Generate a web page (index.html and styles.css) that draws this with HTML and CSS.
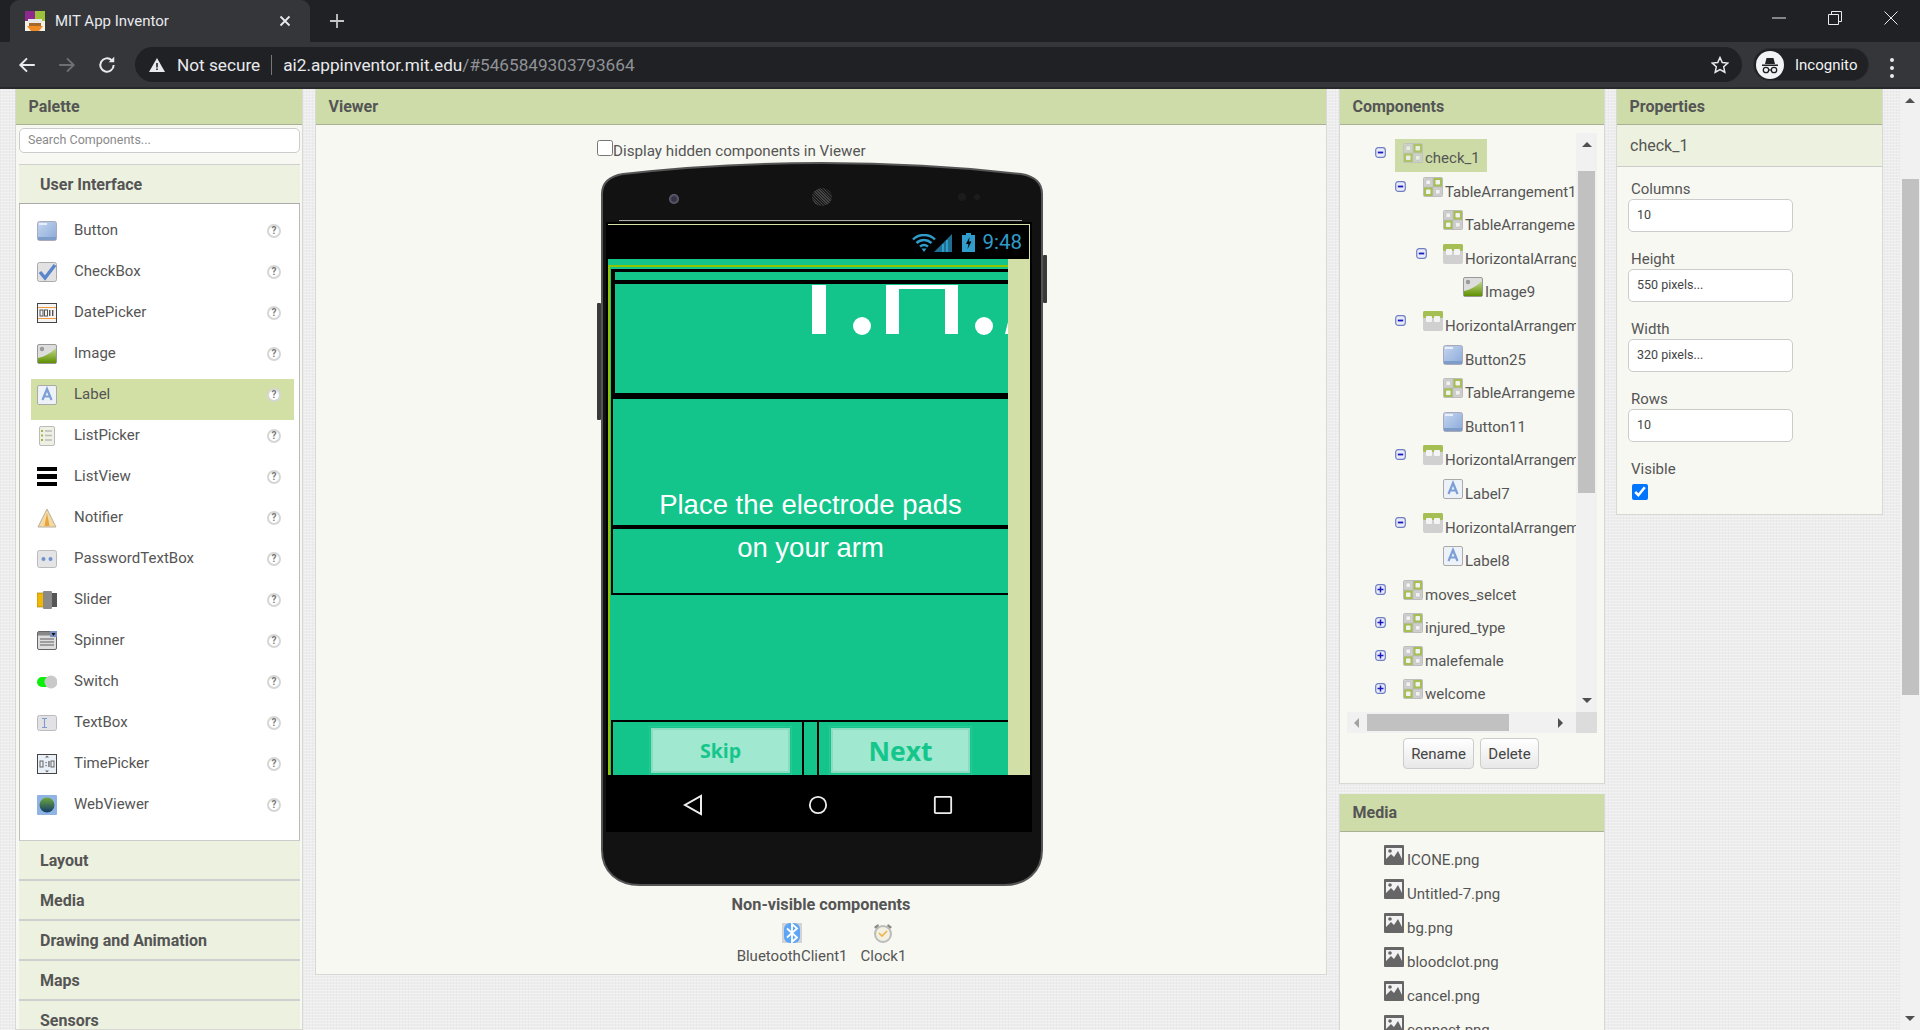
FILE: index.html
```html
<!DOCTYPE html>
<html lang="en">
<head>
<meta charset="utf-8">
<title>MIT App Inventor</title>
<link rel="stylesheet" href="styles.css">
</head>
<body>
<svg class="defs" width="0" height="0" aria-hidden="true">
  <defs>
    <linearGradient id="gBtn" x1="0" y1="0" x2="1" y2="1"><stop offset="0" stop-color="#c5d6f0"/><stop offset="1" stop-color="#8aa9d8"/></linearGradient>
    <linearGradient id="gHill" x1="0" y1="0" x2="0" y2="1"><stop offset="0" stop-color="#c2d98c"/><stop offset="1" stop-color="#5f8f00"/></linearGradient>
    <linearGradient id="gGlobe" x1="0" y1="0" x2="0" y2="1"><stop offset="0" stop-color="#6fa83c"/><stop offset="1" stop-color="#123a6a"/></linearGradient>
  </defs>
  <symbol id="i-button" viewBox="0 0 20 20"><rect x=".5" y=".5" width="19" height="19" rx="2" fill="url(#gBtn)" stroke="#aab"/><rect x="1" y="16" width="18" height="3" fill="#7e9cc8"/><rect x="2" y="2" width="8" height="2" fill="#e6eefa"/></symbol>
  <symbol id="i-check" viewBox="0 0 20 20"><rect x=".5" y=".5" width="19" height="19" rx="2" fill="#e2e2e2" stroke="#aaa"/><path d="M3 10l5 6L18 3" fill="none" stroke="#5b86cc" stroke-width="3.4"/></symbol>
  <symbol id="i-date" viewBox="0 0 20 20"><rect x=".5" y=".5" width="19" height="19" fill="#f4f4f4" stroke="#444"/><rect x="1" y="4" width="18" height="1" fill="#f09a3a"/><rect x="1" y="15" width="18" height="1" fill="#f09a3a"/><rect x="3" y="7" width="3" height="6" fill="none" stroke="#555"/><rect x="7.5" y="7" width="3" height="6" fill="none" stroke="#555"/><rect x="12" y="7" width="1.4" height="6" fill="#555"/><rect x="15" y="7" width="1.4" height="6" fill="#555"/></symbol>
  <symbol id="i-image" viewBox="0 0 20 20"><rect x=".5" y=".5" width="19" height="19" rx="1.5" fill="#ddd" stroke="#999"/><path d="M1 14C6 13 11 11 19 4V19H1z" fill="url(#gHill)"/><circle cx="5" cy="5" r="2.2" fill="#999"/></symbol>
  <symbol id="i-label" viewBox="0 0 20 20"><rect x=".5" y=".5" width="19" height="19" rx="1.5" fill="#edf1f8" stroke="#aaa"/><path d="M5.5 15L10 4l4.500 11M7 11.500h6" fill="none" stroke="#7c9fd6" stroke-width="2.200"/></symbol>
  <symbol id="i-listpicker" viewBox="0 0 20 20"><rect x="2.500" y=".5" width="15" height="19" rx="1.5" fill="#eef0e4" stroke="#bbb"/><path d="M8 5h7M8 9.500h7M8 14h7" stroke="#bbb" stroke-width="1.500"/><path d="M4 5h2M4 9.500h2M4 14h2" stroke="#9ab944" stroke-width="1.800"/></symbol>
  <symbol id="i-listview" viewBox="0 0 20 20"><rect y="0" width="20" height="4" fill="#000"/><rect y="7" width="20" height="5" fill="#000"/><rect y="15" width="20" height="4" fill="#000"/></symbol>
  <symbol id="i-notifier" viewBox="0 0 20 20"><path d="M10 1L19 19H1z" fill="#f3d9a4" stroke="#b9b09a"/><path d="M10 5l2.500 13h-5z" fill="#e8a33c"/></symbol>
  <symbol id="i-password" viewBox="0 0 20 20"><rect x=".5" y="1.500" width="19" height="17" rx="2" fill="#e4e4e6" stroke="#bbb"/><circle cx="6.500" cy="10" r="2" fill="#6f93cc"/><circle cx="13.500" cy="10" r="2" fill="#6f93cc"/></symbol>
  <symbol id="i-slider" viewBox="0 0 20 20"><rect y="3" width="8" height="14" fill="#f2b705" stroke="#9a7b00" stroke-width=".6"/><rect x="14" y="3" width="6" height="14" fill="#555"/><rect x="6" y="1" width="9" height="18" rx="1" fill="#8a8a8a"/></symbol>
  <symbol id="i-spinner" viewBox="0 0 20 20"><rect x=".5" y=".5" width="19" height="18" rx="1.5" fill="#ddd" stroke="#666"/><rect x="1" y="1" width="12" height="3.500" fill="#888"/><rect x="13" y="0" width="7" height="6" fill="#7d92c4"/><path d="M14.500 2h4l-2 3z" fill="#111"/><path d="M3 8h14M3 11h14M3 14h14" stroke="#888" stroke-width="1.300"/></symbol>
  <symbol id="i-switch" viewBox="0 0 20 20"><rect x="0" y="5" width="16" height="10" rx="5" fill="#0bf00b"/><circle cx="14" cy="10" r="6.500" fill="#c9c9c9"/></symbol>
  <symbol id="i-textbox" viewBox="0 0 20 20"><rect x=".5" y="2.500" width="19" height="15" rx="2" fill="#e2e2e6" stroke="#bbb"/><path d="M5 5.500h5M5 14.500h5M7.500 5.500v9" stroke="#7f9bc9" stroke-width="1.100" fill="none"/></symbol>
  <symbol id="i-time" viewBox="0 0 20 20"><rect x=".5" y=".5" width="19" height="19" fill="#eaf0f7" stroke="#444"/><path d="M10 1.500l2 2H8zM10 18.500l2-2H8z" fill="#666"/><rect x="3" y="7" width="3" height="6" fill="none" stroke="#666"/><rect x="8.500" y="8" width="1.200" height="1.200" fill="#666"/><rect x="8.500" y="11" width="1.200" height="1.200" fill="#666"/><rect x="11.300" y="7" width="1.300" height="6" fill="#666"/><rect x="14" y="7" width="3" height="6" fill="none" stroke="#666"/></symbol>
  <symbol id="i-web" viewBox="0 0 20 20"><rect width="20" height="20" rx="1" fill="#8fb4e4"/><circle cx="10" cy="10" r="7.500" fill="url(#gGlobe)"/></symbol>
  <symbol id="i-table" viewBox="0 0 20 20"><rect width="20" height="20" rx="2" fill="#bdbdbd"/><rect x="1" y="1" width="8.500" height="8.500" fill="#cfcfcf"/><rect x="10.500" y="1" width="8.500" height="8.500" fill="#a5bf55"/><rect x="1" y="10.500" width="8.500" height="8.500" fill="#a5bf55"/><rect x="10.500" y="10.500" width="8.500" height="8.500" fill="#cfcfcf"/><rect x="3" y="3" width="4.500" height="4.500" rx=".8" fill="#f2f2f2" stroke="#aaa" stroke-width=".4"/><rect x="12.500" y="3" width="4.500" height="4.500" rx=".8" fill="#f2f2f2"/><rect x="3" y="12.500" width="4.500" height="4.500" rx=".8" fill="#f2f2f2"/><rect x="12.500" y="12.500" width="4.500" height="4.500" rx=".8" fill="#f2f2f2" stroke="#aaa" stroke-width=".4"/></symbol>
  <symbol id="i-horiz" viewBox="0 0 20 20"><rect width="20" height="20" rx="2" fill="#d0d0d0"/><rect width="20" height="7" rx="1.500" fill="#a5bf55"/><rect x="3" y="5" width="6" height="6" rx="1" fill="#f4f4f4"/><rect x="11" y="5" width="6" height="6" rx="1" fill="#f4f4f4"/></symbol>
  <symbol id="i-media" viewBox="0 0 20 20"><rect width="20" height="20" rx="1" fill="#666"/><rect x="2" y="3" width="16" height="11" fill="#f2f2f2"/><path d="M2 14l5-5 3 3 4-6 4 8z" fill="#666"/><circle cx="6" cy="6" r="1.800" fill="#666"/></symbol>
  <symbol id="i-minus" viewBox="0 0 11 11"><rect x=".7" y=".7" width="9.600" height="9.600" rx="2.500" fill="#e9ecf8" stroke="#6f7fc0" stroke-width="1.200"/><rect x="2.800" y="4.600" width="5.400" height="1.800" fill="#1a1ac0"/></symbol>
  <symbol id="i-plus" viewBox="0 0 11 11"><rect x=".7" y=".7" width="9.600" height="9.600" rx="2.500" fill="#e9ecf8" stroke="#6f7fc0" stroke-width="1.200"/><path d="M2.500 5.500h6M5.500 2.500v6" stroke="#1a1ac0" stroke-width="1.500"/></symbol>
</svg>

<header class="tabstrip">
  <div class="tab">
    <svg class="favicon" viewBox="0 0 20 20"><rect width="10" height="10" fill="#8e2a8e"/><rect x="10" width="10" height="10" fill="#9cc23c"/><rect y="10" width="20" height="10" fill="#f6f1e4"/><rect x="3" y="8" width="14" height="4" fill="#e8e8e8"/><rect x="4" y="12" width="12" height="3" fill="#a5682a"/><path d="M2 15h16l-4 5H6z" fill="#f08a24"/></svg>
    <span class="tab-title">MIT App Inventor</span>
    <svg class="tab-close" viewBox="0 0 12 12"><path d="M1.500 1.500l9 9M10.500 1.500l-9 9" stroke="#e8eaed" stroke-width="1.800"/></svg>
  </div>
  <svg class="newtab" viewBox="0 0 16 16"><path d="M8 1v14M1 8h14" stroke="#c4c7c5" stroke-width="1.800"/></svg>
  <div class="winctl">
    <svg viewBox="0 0 14 14"><path d="M0 7h14" stroke="#e8eaed" stroke-width="1"/></svg>
    <svg viewBox="0 0 14 14"><path d="M.5 3.500h10v10H.5zM3.500 3.500v-3h10v10h-3" fill="none" stroke="#e8eaed" stroke-width="1"/></svg>
    <svg viewBox="0 0 14 14"><path d="M.5.500l13 13M13.500.500l-13 13" stroke="#e8eaed" stroke-width="1"/></svg>
  </div>
</header>

<nav class="toolbar">
  <svg class="navbtn" viewBox="0 0 18 18"><path d="M16 9H3M9 3L3 9l6 6" fill="none" stroke="#e8eaed" stroke-width="1.800"/></svg>
  <svg class="navbtn dim" viewBox="0 0 18 18"><path d="M2 9h13M9 3l6 6-6 6" fill="none" stroke="#6d6f73" stroke-width="1.800"/></svg>
  <svg class="navbtn" viewBox="0 0 18 18"><path d="M15 9a6 6 0 1 1-1.800-4.300" fill="none" stroke="#e8eaed" stroke-width="1.800"/><path d="M15.500 1.500v5h-5z" fill="#e8eaed"/></svg>
  <div class="omnibox">
    <svg class="warn" viewBox="0 0 16 14"><path d="M8 0l8 14H0z" fill="#e8eaed"/><path d="M7.200 5h1.600v4.500H7.200zM7.200 10.500h1.600v1.600H7.200z" fill="#202124"/></svg>
    <span class="notsecure">Not secure</span>
    <span class="omnisep"></span>
    <span class="url">ai2.appinventor.mit.edu<span class="urlrest">/#5465849303793664</span></span>
    <svg class="star" viewBox="0 0 18 18"><path d="M9 1.500l2.300 5 5.400.6-4 3.700 1.100 5.400L9 13.500l-4.800 2.700 1.100-5.400-4-3.700 5.400-.6z" fill="none" stroke="#e8eaed" stroke-width="1.500"/></svg>
  </div>
  <div class="profile">
    <svg class="avatar" viewBox="0 0 28 28"><circle cx="14" cy="14" r="14" fill="#f1f3f4"/><path d="M9 13l1.500-6h7L19 13zM6 13.500h16v1.500H6z" fill="#202124"/><circle cx="10" cy="19" r="2.700" fill="none" stroke="#202124" stroke-width="1.300"/><circle cx="18" cy="19" r="2.700" fill="none" stroke="#202124" stroke-width="1.300"/><path d="M12.500 19h3" stroke="#202124" stroke-width="1.200"/></svg>
    <span>Incognito</span>
  </div>
  <div class="menu"><i></i><i></i><i></i></div>
</nav>

<main class="workspace">
  <section class="panel palette">
    <h2 class="panel-head">Palette</h2>
    <div class="searchbox">Search Components...</div>
    <h3 class="section open">User Interface</h3>
    <ul class="plist">
      <li class="prow"><svg class="ico"><use href="#i-button"/></svg><span class="pname">Button</span><span class="help">?</span></li>
      <li class="prow"><svg class="ico"><use href="#i-check"/></svg><span class="pname">CheckBox</span><span class="help">?</span></li>
      <li class="prow"><svg class="ico"><use href="#i-date"/></svg><span class="pname">DatePicker</span><span class="help">?</span></li>
      <li class="prow"><svg class="ico"><use href="#i-image"/></svg><span class="pname">Image</span><span class="help">?</span></li>
      <li class="prow hot"><svg class="ico"><use href="#i-label"/></svg><span class="pname">Label</span><span class="help">?</span></li>
      <li class="prow"><svg class="ico"><use href="#i-listpicker"/></svg><span class="pname">ListPicker</span><span class="help">?</span></li>
      <li class="prow"><svg class="ico"><use href="#i-listview"/></svg><span class="pname">ListView</span><span class="help">?</span></li>
      <li class="prow"><svg class="ico"><use href="#i-notifier"/></svg><span class="pname">Notifier</span><span class="help">?</span></li>
      <li class="prow"><svg class="ico"><use href="#i-password"/></svg><span class="pname">PasswordTextBox</span><span class="help">?</span></li>
      <li class="prow"><svg class="ico"><use href="#i-slider"/></svg><span class="pname">Slider</span><span class="help">?</span></li>
      <li class="prow"><svg class="ico"><use href="#i-spinner"/></svg><span class="pname">Spinner</span><span class="help">?</span></li>
      <li class="prow"><svg class="ico"><use href="#i-switch"/></svg><span class="pname">Switch</span><span class="help">?</span></li>
      <li class="prow"><svg class="ico"><use href="#i-textbox"/></svg><span class="pname">TextBox</span><span class="help">?</span></li>
      <li class="prow"><svg class="ico"><use href="#i-time"/></svg><span class="pname">TimePicker</span><span class="help">?</span></li>
      <li class="prow"><svg class="ico"><use href="#i-web"/></svg><span class="pname">WebViewer</span><span class="help">?</span></li>
    </ul>
    <h3 class="section">Layout</h3>
    <h3 class="section">Media</h3>
    <h3 class="section">Drawing and Animation</h3>
    <h3 class="section">Maps</h3>
    <h3 class="section">Sensors</h3>
  </section>

  <section class="panel viewer">
    <h2 class="panel-head">Viewer</h2>
    <div class="viewer-body">
      <label class="hidden-toggle"><input type="checkbox" class="vcheck">Display hidden components in Viewer</label>
      <div class="phone">
        <svg class="phone-shell" viewBox="0 0 442 724"><path d="M1 32C1 20 10 14 22 12C100 3 170 1 221 1C272 1 342 3 420 12C432 14 441 20 441 32V688C441 710 425 723 403 723H39C17 723 1 710 1 688Z" fill="#121212" stroke="#555" stroke-width="2"/></svg>
        <span class="sidekey left"></span>
        <span class="sidekey right"></span>
        <div class="bezel-top">
          <span class="cam"></span>
          <span class="speaker"></span>
          <span class="sensor"></span>
          <span class="sensor two"></span>
          <span class="bezel-line"></span>
        </div>
        <div class="screen">
          <div class="statusbar">
            <svg class="st-wifi" viewBox="0 0 24 18"><path d="M1 5.500C7-.5 17-.5 23 5.500M4.500 9C9 5 15 5 19.500 9M8 12.500c2.500-2 5.500-2 8 0" fill="none" stroke="#2f9ccb" stroke-width="2.400"/><path d="M9.500 14.500h5L12 18z" fill="#2f9ccb"/></svg>
            <svg class="st-signal" viewBox="0 0 18 18"><path d="M0 18L18 0v18z" fill="#1e6f92"/><path d="M8 18v-8h2v8zM12 18V6h2v12z" fill="#2f9ccb"/></svg>
            <svg class="st-batt" viewBox="0 0 13 19"><path d="M4 0h5v2h4v17H0V2h4z" fill="#2f9ccb"/><path d="M7.500 4L4 11h2.500L5.500 16 9.500 8.500H7z" fill="#000"/></svg>
            <span class="st-time">9:48</span>
          </div>
          <div class="stage">
            <div class="app">
              <div class="form">
                <div class="tbl">
                  <div class="tbl-top">
                    <div class="strip"></div>
                    <svg class="picture" viewBox="0 0 393 109"><path d="M197 1h14v49h-14zM271 1h72v49h-13V5h-46v45h-13z" fill="#fff"/><circle cx="247" cy="42" r="9" fill="#fff"/><circle cx="369" cy="42" r="9" fill="#fff"/><path d="M390 50l3-12v12z" fill="#fff"/></svg>
                  </div>
                  <div class="tbl-mid"><span class="big">Place the electrode pads</span></div>
                  <div class="tbl-low"><span class="big">on your arm</span></div>
                </div>
                <div class="gap"></div>
                <div class="bottombar">
                  <div class="bcell first"><span class="appbtn skip">Skip</span></div>
                  <div class="bcell mid"></div>
                  <div class="bcell last"><span class="appbtn next">Next</span></div>
                </div>
              </div>
            </div>
            <div class="sidestrip"></div>
          </div>
          <div class="navbar">
            <svg class="nv" viewBox="0 0 20 22"><path d="M18 2v18L2 11z" fill="none" stroke="#eee" stroke-width="2"/></svg>
            <svg class="nv" viewBox="0 0 22 22"><circle cx="11" cy="11" r="9" fill="none" stroke="#eee" stroke-width="2"/></svg>
            <svg class="nv" viewBox="0 0 22 22"><rect x="2" y="2" width="18" height="18" rx="1" fill="none" stroke="#eee" stroke-width="2"/></svg>
          </div>
        </div>
      </div>
      <div class="nonvis-title">Non-visible components</div>
      <div class="nonvis">
        <div class="nv-item">
          <svg class="ico" viewBox="0 0 20 20"><rect width="20" height="20" fill="#d4d4d4"/><rect x="2" y="0" width="16" height="20" rx="6" fill="#5ea6f5"/><path d="M5 5.500l10 9-5 4.500V1l5 4.500-10 9" fill="none" stroke="#fff" stroke-width="1.800"/></svg>
          <span>BluetoothClient1</span>
        </div>
        <div class="nv-item">
          <svg class="ico" viewBox="0 0 20 20"><path d="M1 4l4-3 1 2-3 3zM19 4l-4-3-1 2 3 3z" fill="#8a8a7a"/><circle cx="10" cy="11" r="8" fill="#f2f0e0" stroke="#bbb" stroke-width="2"/><path d="M6 10l3 3 5-5" fill="none" stroke="#f2b24a" stroke-width="1.600"/></svg>
          <span>Clock1</span>
        </div>
      </div>
    </div>
  </section>

  <div class="col-comp">
    <section class="panel components">
      <h2 class="panel-head">Components</h2>
      <div class="treebox">
        <div class="tree">
          <div class="node l0"><svg class="tog"><use href="#i-minus"/></svg><div class="nbody sel"><svg class="ico dim"><use href="#i-table"/></svg><span class="nlabel">check_1</span></div></div>
          <div class="node l1"><svg class="tog"><use href="#i-minus"/></svg><div class="nbody"><svg class="ico"><use href="#i-table"/></svg><span class="nlabel">TableArrangement1</span></div></div>
          <div class="node l2 notog"><div class="nbody"><svg class="ico"><use href="#i-table"/></svg><span class="nlabel">TableArrangeme</span></div></div>
          <div class="node l2"><svg class="tog"><use href="#i-minus"/></svg><div class="nbody"><svg class="ico"><use href="#i-horiz"/></svg><span class="nlabel">HorizontalArrang</span></div></div>
          <div class="node l3 notog"><div class="nbody"><svg class="ico"><use href="#i-image"/></svg><span class="nlabel">Image9</span></div></div>
          <div class="node l1"><svg class="tog"><use href="#i-minus"/></svg><div class="nbody"><svg class="ico"><use href="#i-horiz"/></svg><span class="nlabel">HorizontalArrangem</span></div></div>
          <div class="node l2 notog"><div class="nbody"><svg class="ico"><use href="#i-button"/></svg><span class="nlabel">Button25</span></div></div>
          <div class="node l2 notog"><div class="nbody"><svg class="ico"><use href="#i-table"/></svg><span class="nlabel">TableArrangeme</span></div></div>
          <div class="node l2 notog"><div class="nbody"><svg class="ico"><use href="#i-button"/></svg><span class="nlabel">Button11</span></div></div>
          <div class="node l1"><svg class="tog"><use href="#i-minus"/></svg><div class="nbody"><svg class="ico"><use href="#i-horiz"/></svg><span class="nlabel">HorizontalArrangem</span></div></div>
          <div class="node l2 notog"><div class="nbody"><svg class="ico"><use href="#i-label"/></svg><span class="nlabel">Label7</span></div></div>
          <div class="node l1"><svg class="tog"><use href="#i-minus"/></svg><div class="nbody"><svg class="ico"><use href="#i-horiz"/></svg><span class="nlabel">HorizontalArrangem</span></div></div>
          <div class="node l2 notog"><div class="nbody"><svg class="ico"><use href="#i-label"/></svg><span class="nlabel">Label8</span></div></div>
          <div class="node l0 closed"><svg class="tog"><use href="#i-plus"/></svg><div class="nbody"><svg class="ico"><use href="#i-table"/></svg><span class="nlabel">moves_selcet</span></div></div>
          <div class="node l0 closed"><svg class="tog"><use href="#i-plus"/></svg><div class="nbody"><svg class="ico"><use href="#i-table"/></svg><span class="nlabel">injured_type</span></div></div>
          <div class="node l0 closed"><svg class="tog"><use href="#i-plus"/></svg><div class="nbody"><svg class="ico"><use href="#i-table"/></svg><span class="nlabel">malefemale</span></div></div>
          <div class="node l0 closed"><svg class="tog"><use href="#i-plus"/></svg><div class="nbody"><svg class="ico"><use href="#i-table"/></svg><span class="nlabel">welcome</span></div></div>
          <div class="node l0 closed"><span class="togspace"></span><div class="nbody"><svg class="ico"><use href="#i-table"/></svg></div></div>
        </div>
        <div class="vbar">
          <span class="arrow up"></span>
          <span class="vthumb"></span>
          <span class="arrow down"></span>
        </div>
        <div class="hbar">
          <span class="arrow lf"></span>
          <span class="hthumb"></span>
          <span class="arrow rt"></span>
        </div>
        <div class="corner"></div>
      </div>
      <div class="actions">
        <button class="btn rename">Rename</button>
        <button class="btn delete">Delete</button>
      </div>
    </section>
    <section class="panel media">
      <h2 class="panel-head media-head">Media</h2>
      <ul class="mlist">
        <li class="mrow"><svg class="ico"><use href="#i-media"/></svg><span>ICONE.png</span></li>
        <li class="mrow"><svg class="ico"><use href="#i-media"/></svg><span>Untitled-7.png</span></li>
        <li class="mrow"><svg class="ico"><use href="#i-media"/></svg><span>bg.png</span></li>
        <li class="mrow"><svg class="ico"><use href="#i-media"/></svg><span>bloodclot.png</span></li>
        <li class="mrow"><svg class="ico"><use href="#i-media"/></svg><span>cancel.png</span></li>
        <li class="mrow"><svg class="ico"><use href="#i-media"/></svg><span>connect.png</span></li>
      </ul>
    </section>
  </div>

  <section class="panel properties">
    <h2 class="panel-head">Properties</h2>
    <div class="prop-title">check_1</div>
    <div class="prop-body">
      <div class="prop"><div class="prop-label">Columns</div><div class="prop-input">10</div></div>
      <div class="prop"><div class="prop-label">Height</div><div class="prop-input">550 pixels...</div></div>
      <div class="prop"><div class="prop-label">Width</div><div class="prop-input">320 pixels...</div></div>
      <div class="prop"><div class="prop-label">Rows</div><div class="prop-input">10</div></div>
      <div class="prop"><div class="prop-label">Visible</div><input type="checkbox" class="pcheck" checked></div>
    </div>
  </section>

  <aside class="pagebar">
    <span class="arrow up"></span>
    <span class="pagethumb"></span>
    <span class="arrow down"></span>
  </aside>
</main>
</body>
</html>
```

FILE: styles.css
```css
* { box-sizing: border-box; }
html, body { margin: 0; padding: 0; }
body {
  width: 1920px;
  height: 1030px;
  overflow: hidden;
  display: flex;
  flex-direction: column;
  font-family: Roboto, "Liberation Sans", sans-serif;
  color: #555;
  background-color: #ededed;
  background-image:
    repeating-linear-gradient(0deg, rgba(255,255,255,.35) 0 1px, transparent 1px 3px),
    repeating-linear-gradient(90deg, rgba(0,0,0,.025) 0 1px, transparent 1px 3px);
}
ul { list-style: none; margin: 0; padding: 0; }
h2, h3 { margin: 0; }
.defs { position: absolute; }

/* browser chrome */
.tabstrip {
  height: 42px;
  flex: none;
  display: flex;
  align-items: center;
  background: #202124;
  padding-left: 10px;
}
.tab {
  width: 300px;
  height: 42px;
  background: #35363a;
  border-radius: 9px 9px 0 0;
  display: flex;
  align-items: center;
  padding-left: 15px;
  color: #e8eaed;
}
.favicon { width: 20px; height: 20px; flex: none; }
.tab-title { margin-left: 10px; font-size: 15px; width: 225px; }
.tab-close { width: 12px; height: 12px; margin-left: -1px; }
.newtab { width: 16px; height: 16px; margin-left: 19px; }
.winctl { margin-left: auto; display: flex; gap: 42px; padding-right: 22px; margin-top: -6px; }
.winctl svg { width: 14px; height: 14px; }

.toolbar {
  height: 47px;
  flex: none;
  display: flex;
  align-items: flex-start;
  background: #35363a;
  border-bottom: 2px solid #28292c;
  padding: 5px 0 0 17px;
}
.navbtn { width: 20px; height: 20px; margin: 8px 20px 0 0; }
.omnibox {
  margin-left: -2px;
  width: 1607px;
  height: 35px;
  border-radius: 18px;
  background: #202124;
  display: flex;
  align-items: center;
  padding-left: 14px;
  font-size: 17.2px;
  color: #e8eaed;
}
.warn { width: 16px; height: 14px; flex: none; }
.notsecure { margin-left: 12px; }
.omnisep { width: 1px; height: 20px; background: #777; margin: 0 11px; }
.urlrest { color: #8f9296; }
.star { width: 18px; height: 18px; margin-left: auto; margin-right: 13px; }
.profile {
  margin: 1px 0 0 11px;
  width: 116px;
  height: 33px;
  border-radius: 17px;
  border: 1px solid #2a2b2e;
  background: #202124;
  display: flex;
  align-items: center;
  padding-left: 2px;
  font-size: 15px;
  color: #f1f3f4;
  gap: 11px;
}
.avatar { width: 28px; height: 28px; flex: none; }
.menu { margin: 11px 0 0 21px; display: flex; flex-direction: column; gap: 4px; }
.menu i { width: 4px; height: 4px; border-radius: 50%; background: #e8eaed; display: block; }

/* workspace */
.workspace {
  flex: 1;
  min-height: 0;
  display: flex;
  align-items: flex-start;
  padding-left: 15px;
  overflow: hidden;
}
.panel {
  background: #f7f8f2;
  border: 1px solid #d8d8d4;
  border-top: 0;
}
.panel-head {
  height: 36px;
  background: #cddca9;
  border-bottom: 1px solid #aab095;
  font-size: 16px;
  font-weight: 700;
  line-height: 35px;
  padding-left: 12.500px;
  color: #555;
}
.media-head { height: 38px; line-height: 37px; }

/* palette */
.palette { width: 288px; height: 941px; overflow: hidden; flex: none; padding: 0; }
.searchbox {
  margin: 3px 2px 11px 3px;
  height: 25px;
  border: 1px solid #ccc;
  border-radius: 5px;
  background: #fff;
  font-size: 12.5px;
  line-height: 22px;
  color: #8a8a8a;
  padding-left: 8px;
}
.section {
  margin: 0 2px 0 3px;
  height: 40px;
  background: #edf1df;
  border-bottom: 2px solid #cfcfcf;
  font-size: 16px;
  font-weight: 700;
  line-height: 40px;
  padding-left: 21px;
}
.section.open { border-top: 1px solid #cfcfcf; border-bottom: 1px solid #aaa; line-height: 39px; }
.plist {
  margin: 0 2px 0 3px;
  background: #fff;
  border: 1px solid #bbb;
  border-top: 0;
  border-bottom: 1px solid #ccc;
  padding: 11px 5px 10px 11px;
}
.prow {
  height: 41px;
  display: flex;
  align-items: flex-start;
  padding: 6px 13px 0 6px;
  font-size: 15px;
}
.prow.hot { background: #d3e0a5; }
.ico { width: 20px; height: 20px; flex: none; display: block; }
.ico.dim { opacity: .8; }
.pname { margin-left: 17px; line-height: 18px; flex: 1; }
.help {
  width: 14px;
  height: 14px;
  margin-top: 3px;
  border: 2px solid #d6d6d6;
  border-radius: 50%;
  background: #fff;
  color: #777;
  font-size: 10px;
  font-weight: 700;
  line-height: 10px;
  text-align: center;
}

/* viewer */
.viewer { margin-left: 12px; width: 1012px; height: 886px; flex: none; }
.viewer-body { padding: 15px 0 0 0; }
.hidden-toggle {
  display: flex;
  align-items: flex-start;
  margin-left: 281px;
  height: 22px;
  font-size: 15.2px;
  line-height: 22px;
}
.vcheck { width: 16px; height: 16px; margin: 0; flex: none; }
.phone {
  position: relative;
  margin-left: 285px;
  width: 442px;
  height: 724px;
}
.phone-shell { position: absolute; inset: 0; width: 442px; height: 724px; }
.sidekey { position: absolute; width: 4px; background: #3a3a3a; border-radius: 1px; }
.sidekey.left { left: -4px; top: 141px; height: 117px; }
.sidekey.right { right: -4px; top: 93px; height: 48px; }
.bezel-top { position: relative; height: 60px; }
.cam {
  position: absolute; left: 68px; top: 32px; width: 10px; height: 10px; border-radius: 50%;
  background: radial-gradient(circle, #334 0 30%, #667 70%, #222);
}
.speaker {
  position: absolute; left: 211px; top: 26px; width: 20px; height: 18px; border-radius: 50%;
  background: repeating-linear-gradient(45deg, #444 0 1px, #1c1c1c 1px 2px);
}
.sensor { position: absolute; left: 357px; top: 31px; width: 8px; height: 8px; border-radius: 50%; background: #1c1c1c; }
.sensor.two { left: 373px; width: 6px; height: 6px; top: 32px; }
.bezel-line { position: absolute; left: 18px; top: 58px; width: 403px; height: 1px; background: #aaa; }
.screen {
  position: relative;
  margin-left: 5px;
  width: 426px;
  height: 610px;
  background: #000;
  padding: 2px 0 0 2px;
}
.statusbar {
  width: 422px;
  height: 35px;
  border-top: 1px solid #d2dfa6;
  border-right: 1px solid #d2dfa6;
  display: flex;
  align-items: center;
  justify-content: flex-end;
  padding: 0 7px 0 0;
  color: #2f9ccb;
}
.st-wifi { width: 24px; height: 18px; margin-top: 1px; }
.st-signal { width: 18px; height: 18px; margin-left: -2px; margin-top: 1px; }
.st-batt { width: 13px; height: 19px; margin-left: 10px; }
.st-time { margin-left: 7px; font-size: 20.5px; line-height: 24px; }
.stage { display: flex; width: 422px; height: 516px; border-right: 1px solid #d2dfa6; }
.app { width: 400px; height: 516px; overflow: hidden; background: #13c48b; padding-top: 6px; flex: none; }
.sidestrip { flex: 1; background: #d2dfa6; }
.form { height: 510px; border-top: 2px solid #8fc400; border-left: 2px solid #8fc400; padding-left: 1px; padding-top: 2px; }
.tbl {
  border-top: 2px solid #000;
  border-left: 2px solid #000;
  border-bottom: 2px solid #000;
}
.tbl-top { height: 128px; border-left: 2px solid #000; border-bottom: 6px solid #000; }
.strip { height: 13px; border-top: 1px solid #000; border-bottom: 4px solid #000; }
.picture { display: block; width: 393px; height: 109px; margin-top: 0; }
.tbl-mid { height: 130px; border-bottom: 4px solid #000; display: flex; align-items: flex-end; justify-content: center; }
.tbl-low { height: 64px; display: flex; align-items: flex-start; justify-content: center; }
.big { font-family: "Liberation Sans", Arial, sans-serif; font-size: 27.5px; color: #fff; line-height: 40px; }
.tbl-low .big { line-height: 38px; }
.gap { height: 125px; }
.bottombar {
  display: flex;
  height: 60px;
  border-top: 2px solid #000;
  border-left: 2px solid #000;
}
.bcell { height: 58px; padding-top: 6px; flex: none; }
.bcell.first { width: 189px; padding-left: 38px; }
.bcell.mid { width: 17px; border-left: 2px solid #000; border-right: 2px solid #000; }
.bcell.last { width: 180px; padding-left: 12px; }
.appbtn {
  display: block;
  width: 139px;
  height: 45px;
  background: #a0e8cf;
  border: 2px solid #8bdcc0;
  outline: 1px solid #25ca94;
  outline-offset: 1px;
  color: #14c68c;
  font-family: "Open Sans", sans-serif;
  font-weight: 700;
  text-align: center;
  line-height: 42px;
}
.skip { font-size: 19.5px; }
.next { font-size: 26.5px; }
.navbar {
  width: 422px;
  margin-left: -2px;
  height: 55px;
  display: flex;
  align-items: center;
  padding-left: 77px;
  gap: 105px;
  background: #000;
}
.nv { width: 20px; height: 22px; flex: none; margin-top: 4px; }
.nonvis-title { margin-top: 9px; text-align: center; font-size: 16.3px; font-weight: 700; line-height: 20px; }
.nonvis { margin-top: 8px; padding-left: 1px; display: flex; justify-content: center; gap: 13px; }
.nv-item { display: flex; flex-direction: column; align-items: center; font-size: 15px; line-height: 22px; }
.nv-item span { margin-top: 2px; }

/* components */
.col-comp { margin-left: 12px; width: 266px; flex: none; display: flex; flex-direction: column; gap: 10px; }
.components { height: 695px; }
.treebox {
  margin: 8px 0 0 7px;
  width: 250px;
  display: grid;
  grid-template-columns: 229px 21px;
  grid-template-rows: 579px 21px;
}
.tree { overflow: hidden; padding-top: 6px; }
.node { height: 33.6px; display: flex; align-items: flex-start; white-space: nowrap; }
.node.closed { height: 33px; }
.node.l0 { padding-left: 28px; }
.node.l1 { padding-left: 48px; }
.node.l2 { padding-left: 69px; }
.node.l2.notog { padding-left: 96px; }
.node.l3.notog { padding-left: 116px; }
.tog { width: 11px; height: 11px; flex: none; margin: 8px 17px 0 0; }
.togspace { width: 28px; flex: none; }
.node.l2 .tog { margin-right: 16px; }
.nbody { display: flex; align-items: flex-start; padding-top: 4px; }
.nbody.sel { background: #cddca6; margin-left: -8px; padding-left: 8px; padding-right: 7px; height: 33px; }
.nlabel { margin-left: 2px; margin-top: 5px; font-size: 15px; line-height: 20px; }
.vbar { background: #f1f1f1; padding: 0 2px; display: flex; flex-direction: column; align-items: center; }
.vthumb { width: 17px; height: 322px; background: #c1c1c1; margin-top: 24px; }
.hbar { background: #f1f1f1; display: flex; align-items: center; padding-left: 7px; }
.hthumb { width: 142px; height: 17px; background: #c1c1c1; margin-left: 8px; }
.corner { background: #dcdcdc; }
.arrow { display: block; width: 0; height: 0; border-style: solid; border-color: transparent; flex: none; }
.arrow.up { border-width: 0 5px 5px; border-bottom-color: #505050; margin-top: 9px; }
.arrow.down { border-width: 5px 5px 0; border-top-color: #505050; margin-top: auto; margin-bottom: 9px; }
.arrow.lf { border-width: 5px 5px 5px 0; border-right-color: #a3a3a3; }
.arrow.rt { border-width: 5px 0 5px 5px; border-left-color: #505050; margin-left: 49px; }
.actions { margin-top: 5px; display: flex; justify-content: center; gap: 6px; padding-right: 2px; }
.btn {
  height: 31px;
  border: 1px solid #ccc;
  border-radius: 4px;
  background: linear-gradient(#fff, #e8e8e8);
  font-family: Roboto, sans-serif;
  font-size: 15px;
  color: #444;
  padding: 0;
}
.rename { width: 71px; }
.delete { width: 59px; }
.media { height: 260px; overflow: hidden; }
.mlist { padding: 13px 0 0 44px; }
.mrow { height: 34px; display: flex; align-items: flex-start; font-size: 15px; }
.mrow span { margin-left: 3px; margin-top: 5px; line-height: 20px; }

/* properties */
.properties { margin-left: 11px; width: 267px; flex: none; height: 426px; }
.prop-title { height: 42px; background: #edf1df; border-bottom: 1px solid #ccc; font-size: 16px; line-height: 41px; padding-left: 13px; }
.prop-body { padding: 12px 0 0 11px; }
.prop { height: 70px; font-size: 15px; }
.prop-label { height: 20px; line-height: 20px; padding-left: 3px; }
.prop-input {
  width: 165px;
  height: 33px;
  border: 1px solid #ccc;
  border-radius: 5px;
  background: #fff;
  font-size: 12.5px;
  line-height: 29px;
  padding-left: 8px;
  color: #444;
}
.pcheck { width: 16px; height: 16px; margin: 5px 0 0 4px; display: block; }

/* page scrollbar */
.pagebar {
  margin-left: auto;
  width: 20px;
  height: 941px;
  background: #f1f1f1;
  display: flex;
  flex-direction: column;
  align-items: center;
  flex: none;
}
.pagethumb { width: 17px; height: 516px; background: #c1c1c1; margin-top: 76px; }
```
